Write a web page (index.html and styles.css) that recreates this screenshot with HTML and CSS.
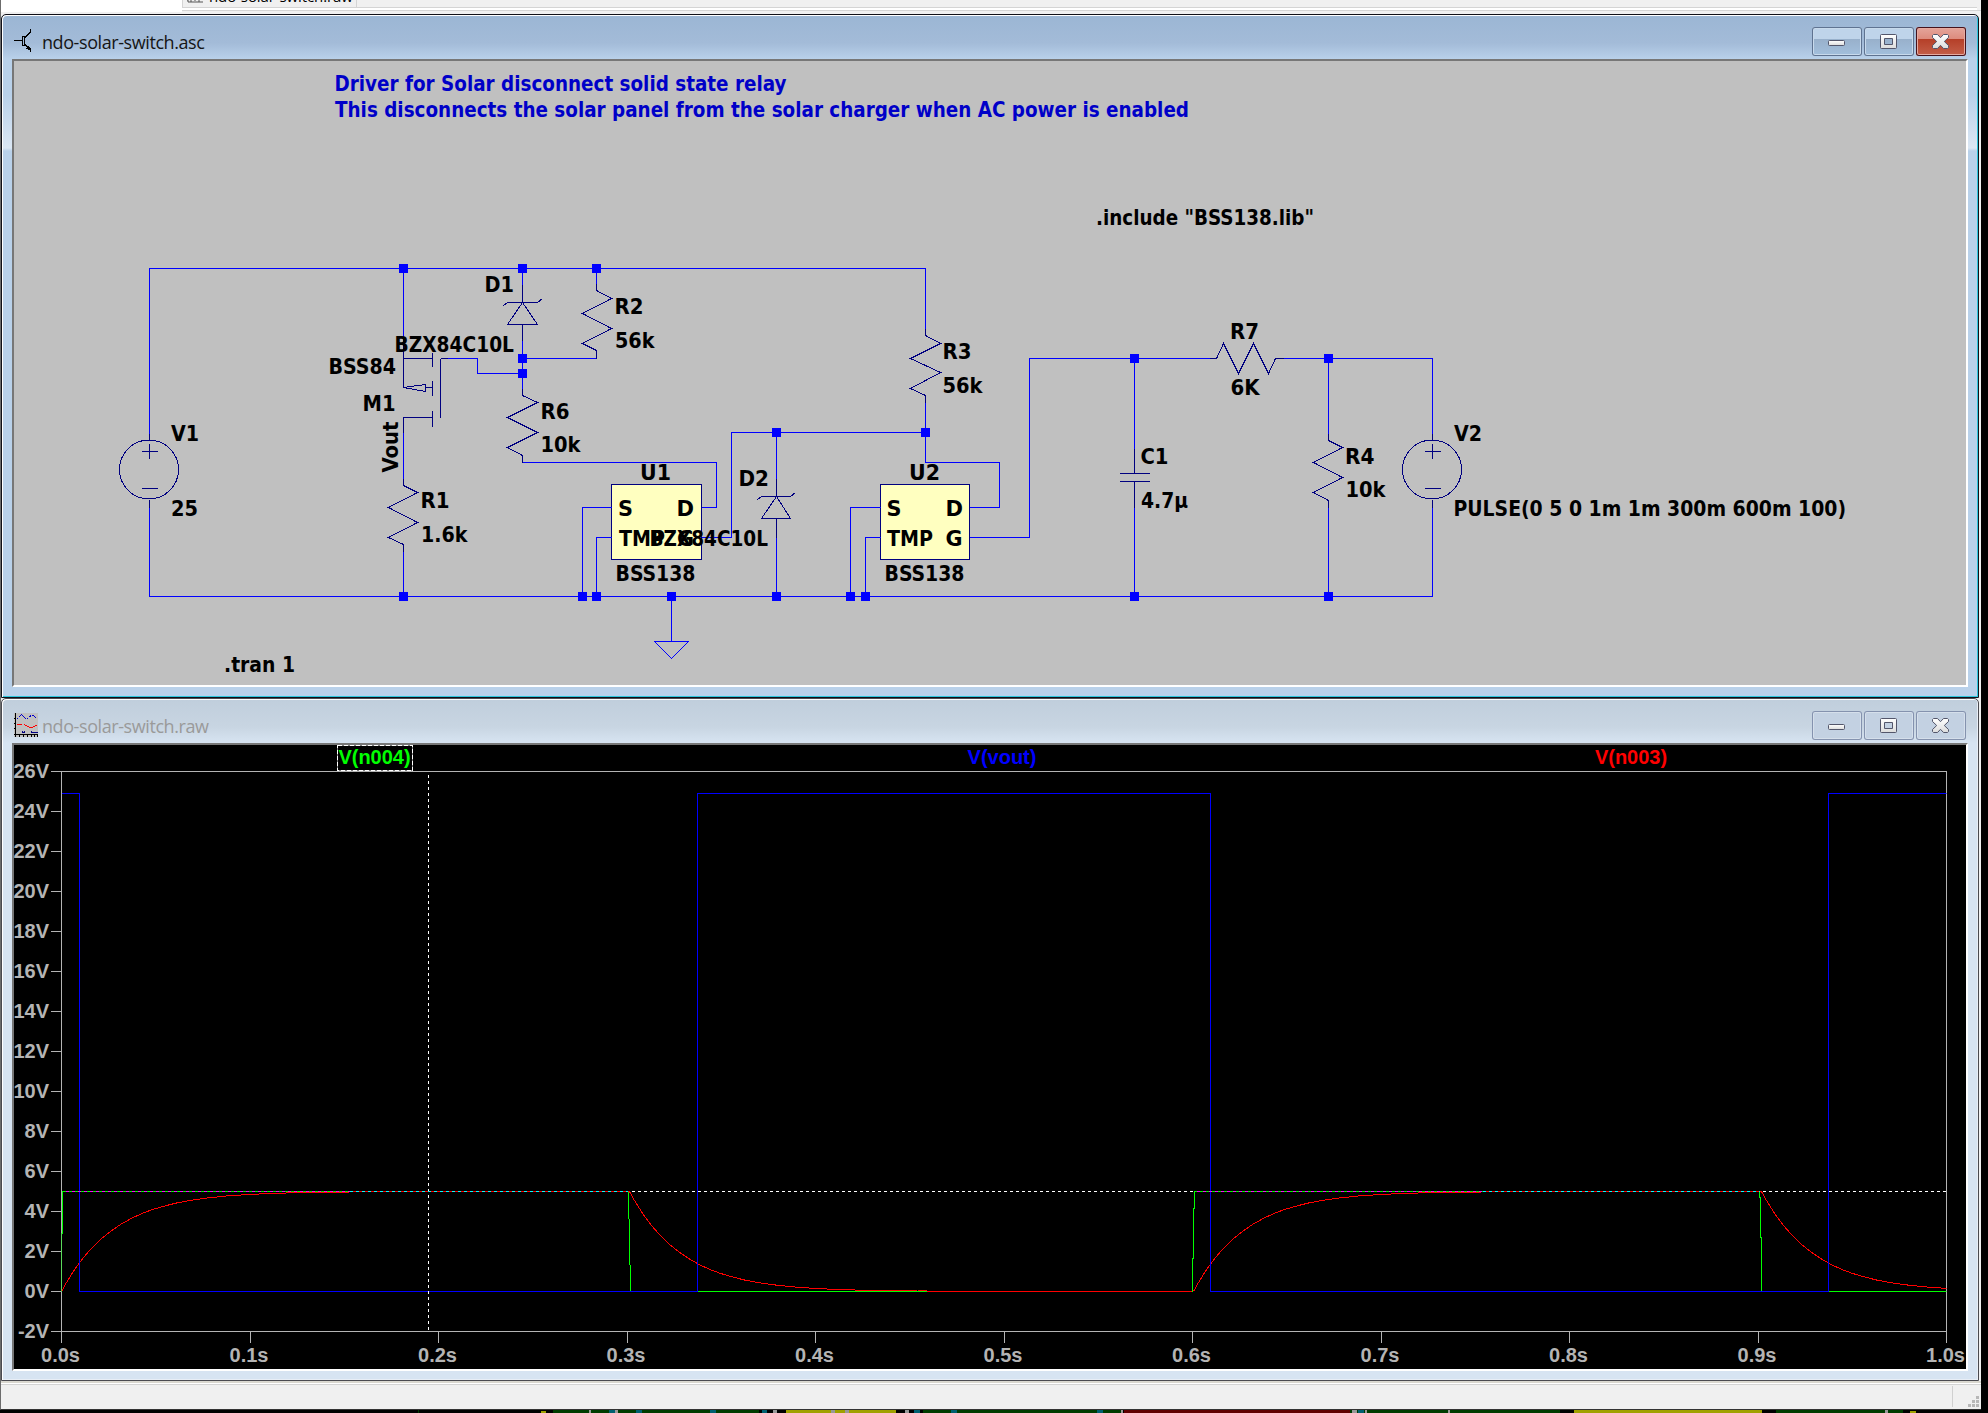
FILE: index.html
```html
<!DOCTYPE html>
<html lang="en">
<head>
<meta charset="utf-8">
<title>ndo-solar-switch</title>
<link rel="stylesheet" href="styles.css">
</head>
<body>
<svg class="symbols" width="0" height="0" aria-hidden="true">
  <defs>
    <linearGradient id="face" x1="0" y1="0" x2="0" y2="1"><stop offset="0" stop-color="#fff"/><stop offset="1" stop-color="#dcdcdc"/></linearGradient>
    <g id="ic-min"><rect x="16.5" y="13.5" width="16" height="5" rx="1" fill="url(#face)" stroke="#53566b"/></g>
    <g id="ic-max"><path d="M17.5 7.500H31.500Q32.500 7.500 32.500 8.500V20.500Q32.500 21.500 31.500 21.500H17.500Q16.500 21.500 16.500 20.500V8.500Q16.500 7.500 17.500 7.500ZM20.500 11.500V17.500H28.500V11.500Z" fill="url(#face)" fill-rule="evenodd" stroke="#53566b"/></g>
    <g id="ic-close"><path d="M17.500 7.500H21.500L24.500 10.700L27.500 7.500H31.500L32.500 8.500V10.500L28.300 14.500L32.500 18.500V20.500L31.500 21.500H27.500L24.500 18.300L21.500 21.500H17.500L16.500 20.500V18.500L20.700 14.500L16.500 10.500V8.500Z" fill="url(#face)" stroke="#53566b"/></g>
    <path id="decay" d="M0 0L5 9L10 17.100L15 24.600L20 31.300L25 37.500L30 43.100L35 48.200L40 52.900L50 60.900L60 67.600L70 73.200L80 77.800L90 81.600L100 84.700L115 88.500L130 91.300L145 93.400L165 95.500L185 96.900L210 98.100L240 98.900L288 99"/>
  </defs>
</svg>
<div class="app">
  <div class="tabs">
    <div class="tab current"></div>
    <div class="tab">
      <svg class="tab-icon" width="16" height="3"><path d="M0 0H1V2H16M4 0V2M8 0V1M12 0V2" fill="none" stroke="#555"/></svg>
      <span>ndo-solar-switch.raw</span>
    </div>
    <div class="tab-rest"></div>
  </div>

  <section class="window active">
    <header class="titlebar">
      <svg class="win-icon" width="24" height="24" viewBox="0 0 24 24" shape-rendering="crispEdges"><path d="M0 11.500H8M8.500 7V17M10.500 7V17M8 7.500H11M8 16.500H11M11 8.500L16.500 3V0M11 15.500L14 18.500" fill="none" stroke="#000"/><path d="M12 19H14V17H15V18H16V19H17V23H16V21H14V20H12Z" fill="#000"/></svg>
      <h1>ndo-solar-switch.asc</h1>
      <div class="buttons">
        <svg class="btn" viewBox="0 0 50 29"><use href="#ic-min"/></svg>
        <svg class="btn" viewBox="0 0 50 29"><use href="#ic-max"/></svg>
        <svg class="btn close" viewBox="0 0 50 29"><use href="#ic-close"/></svg>
      </div>
    </header>
    <div class="client">
      <svg class="schematic" width="1952" height="624" viewBox="14 61 1952 624">
        <g transform="translate(.5 .5)" shape-rendering="crispEdges">
          <g class="chip"><rect x="611" y="484" width="90" height="75"/><rect x="880" y="484" width="89" height="75"/></g>
          <g class="wire">
            <path d="M149 433V268H925V328M149 507V596H1432V507M403 268V343M403 432V478M403 551V596"/>
            <path d="M522 268V284M522 340V388M596 268V283M522 358H596M447 358H477V373H522M522 462H716V507H701"/>
            <path d="M611 507H582V596M611 537H596V596M701 537H731V432H925M776 432V478M776 537V596"/>
            <path d="M925 402V462H999V507H969M880 507H850V596M880 537H865V596M969 537H1029V358H1209M1283 358H1432V433"/>
            <path d="M1134 358V448M1134 507V596M1328 358V433M1328 507V596M671 596V641M654 641H688L671 658Z"/>
          </g>
          <g class="part">
            <circle cx="148.500" cy="469" r="29.500"/><path d="M149 433V440M149 499V507M141 451H157M149 443V458M141 488H157"/>
            <circle cx="1431.500" cy="469" r="29.500"/><path d="M1432 433V440M1432 499V507M1424 451H1440M1432 443V458M1424 488H1440"/>
            <path d="M403 343V387M403 358H432M432 352V366M432 380V395M432 410V426M440 358V417M440 358H447M403 387L425 384V391L403 387M425 387H432M432 417H403V432"/>
            <path d="M403 478V485L417 492L388 507L417 522L388 537L403 544V551"/>
            <path d="M522 388V395L537 402L507 417L537 432L507 447L522 455V462"/>
            <path d="M596 283V290L611 298L582 313L611 328L582 343L596 350V358"/>
            <path d="M925 328V335L940 343L910 358L940 372L910 388L925 395V402"/>
            <path d="M1328 433V440L1342 447L1313 462L1342 477L1313 492L1328 500V507"/>
            <path d="M1209 358H1216L1223 343L1238 373L1253 343L1268 373L1275 358H1283"/>
            <path d="M522 284V302L507 324H537L522 302M522 324V340M503 305L507 302H537L542 298"/>
            <path d="M776 478V496L761 518H790L776 496M776 518V537M757 499L761 496H790L795 492"/>
            <path d="M1134 448V473M1119 473H1149M1119 481H1149M1134 481V507"/>
          </g>
          <g class="node">
            <path d="M403 268h0M522 268h0M596 268h0M522 358h0M522 373h0M776 432h0M925 432h0M1134 358h0M1328 358h0"/>
            <path d="M403 596h0M582 596h0M596 596h0M671 596h0M776 596h0M850 596h0M865 596h0M1134 596h0M1328 596h0"/>
          </g>
        </g>
        <g class="note">
          <text x="334.500" y="91" textLength="452" lengthAdjust="spacingAndGlyphs">Driver for Solar disconnect solid state relay</text>
          <text x="335" y="117" textLength="854" lengthAdjust="spacingAndGlyphs">This disconnects the solar panel from the solar charger when AC power is enabled</text>
        </g>
        <g class="label">
          <text x="1096" y="225" textLength="218" lengthAdjust="spacingAndGlyphs">.include "BSS138.lib"</text>
          <text x="224" y="672" textLength="71" lengthAdjust="spacingAndGlyphs">.tran 1</text>
          <text x="484.500" y="292" textLength="29.500" lengthAdjust="spacingAndGlyphs">D1</text><text x="394.500" y="352" textLength="119.500" lengthAdjust="spacingAndGlyphs">BZX84C10L</text>
          <text x="328.500" y="374" textLength="67.500" lengthAdjust="spacingAndGlyphs">BSS84</text><text x="362.500" y="411" textLength="33" lengthAdjust="spacingAndGlyphs">M1</text>
          <text x="614.500" y="314" textLength="29" lengthAdjust="spacingAndGlyphs">R2</text><text x="615" y="348" textLength="39.500" lengthAdjust="spacingAndGlyphs">56k</text>
          <text x="540.500" y="419" textLength="29" lengthAdjust="spacingAndGlyphs">R6</text><text x="540.500" y="452" textLength="40" lengthAdjust="spacingAndGlyphs">10k</text>
          <text x="171" y="441" textLength="28" lengthAdjust="spacingAndGlyphs">V1</text><text x="171" y="516" textLength="27" lengthAdjust="spacingAndGlyphs">25</text>
          <text transform="translate(398 472.500) rotate(-90)" textLength="51" lengthAdjust="spacingAndGlyphs">Vout</text>
          <text x="420.500" y="508" textLength="29" lengthAdjust="spacingAndGlyphs">R1</text><text x="421" y="542" textLength="46.500" lengthAdjust="spacingAndGlyphs">1.6k</text>
          <text x="640" y="480" textLength="31" lengthAdjust="spacingAndGlyphs">U1</text><text x="909" y="480" textLength="31" lengthAdjust="spacingAndGlyphs">U2</text>
          <text x="618" y="516" textLength="15" lengthAdjust="spacingAndGlyphs">S</text><text x="676.500" y="516" textLength="17.500" lengthAdjust="spacingAndGlyphs">D</text>
          <text x="619" y="546" textLength="46" lengthAdjust="spacingAndGlyphs">TMP</text><text x="677" y="546" textLength="17" lengthAdjust="spacingAndGlyphs">G</text>
          <text x="615.500" y="581" textLength="80" lengthAdjust="spacingAndGlyphs">BSS138</text>
          <text x="738.500" y="486" textLength="30.500" lengthAdjust="spacingAndGlyphs">D2</text><text x="649.500" y="546" textLength="118.500" lengthAdjust="spacingAndGlyphs">BZX84C10L</text>
          <text x="886.500" y="516" textLength="15" lengthAdjust="spacingAndGlyphs">S</text><text x="945.500" y="516" textLength="17.500" lengthAdjust="spacingAndGlyphs">D</text>
          <text x="887" y="546" textLength="46" lengthAdjust="spacingAndGlyphs">TMP</text><text x="945.500" y="546" textLength="17" lengthAdjust="spacingAndGlyphs">G</text>
          <text x="884.500" y="581" textLength="80" lengthAdjust="spacingAndGlyphs">BSS138</text>
          <text x="942.500" y="359" textLength="29" lengthAdjust="spacingAndGlyphs">R3</text><text x="942.500" y="393" textLength="40" lengthAdjust="spacingAndGlyphs">56k</text>
          <text x="1140.500" y="464" textLength="28" lengthAdjust="spacingAndGlyphs">C1</text><text x="1141" y="508" textLength="47" lengthAdjust="spacingAndGlyphs">4.7µ</text>
          <text x="1230" y="339" textLength="29" lengthAdjust="spacingAndGlyphs">R7</text><text x="1230.500" y="395" textLength="29" lengthAdjust="spacingAndGlyphs">6K</text>
          <text x="1345" y="464" textLength="29.500" lengthAdjust="spacingAndGlyphs">R4</text><text x="1345.500" y="497" textLength="40" lengthAdjust="spacingAndGlyphs">10k</text>
          <text x="1454" y="441" textLength="28" lengthAdjust="spacingAndGlyphs">V2</text><text x="1453.500" y="516" textLength="392.500" lengthAdjust="spacingAndGlyphs">PULSE(0 5 0 1m 1m 300m 600m 100)</text>
        </g>
      </svg>
    </div>
  </section>

  <section class="window">
    <header class="titlebar">
      <svg class="win-icon" width="24" height="24" viewBox="0 0 24 24" shape-rendering="crispEdges"><rect width="24" height="24" fill="#c0c0c0"/><path d="M1.500 0V24M0 21.500H24M5.500 21V24M9.500 21V24M13.500 21V24M17.500 21V24M20.500 21V24M23.500 21V24M0 5.500H2M0 10.500H2M0 15.500H2" fill="none" stroke="#000"/><path d="M3 6L7.500 1.500L12 6M13 6L17 2.500H19L23 6" fill="none" stroke="#00c" stroke-dasharray="2 1"/><path d="M3 11.500H8M10 11.500L15 14H19L23 12" fill="none" stroke="#f00"/><path d="M8.500 18V19.500H10.500V18M17.500 18V19.500H24" fill="none" stroke="#000080"/></svg>
      <h1>ndo-solar-switch.raw</h1>
      <div class="buttons">
        <svg class="btn" viewBox="0 0 50 29"><use href="#ic-min"/></svg>
        <svg class="btn" viewBox="0 0 50 29"><use href="#ic-max"/></svg>
        <svg class="btn" viewBox="0 0 50 29"><use href="#ic-close"/></svg>
      </div>
    </header>
    <div class="client plot">
      <svg width="1952" height="624" viewBox="14 745 1952 624">
        <clipPath id="area"><rect x="61" y="771" width="1885" height="561"/></clipPath>
        <g transform="translate(.5 .5)" fill="none" shape-rendering="crispEdges">
          <path class="axis" d="M61 771H1946V1342M61 771V1342M61 1331H1946M50 771H61M50 811H61M50 851H61M50 891H61M50 931H61M50 971H61M50 1011H61M50 1051H61M50 1091H61M50 1131H61M50 1171H61M50 1211H61M50 1251H61M50 1291H61M50 1331H61M250 1331V1342M438 1331V1342M627 1331V1342M815 1331V1342M1004 1331V1342M1192 1331V1342M1381 1331V1342M1569 1331V1342M1758 1331V1342"/>
          <g clip-path="url(#area)">
            <g stroke="#f00">
              <use href="#decay" transform="translate(61 1291) scale(1 -1)"/>
              <use href="#decay" transform="translate(629 1191)"/>
              <use href="#decay" transform="translate(1193 1291) scale(1 -1)"/>
              <use href="#decay" transform="translate(1761 1191)"/>
              <path d="M349 1191H628M917 1290H926M926 1291H1192M1482 1191H1760"/>
            </g>
            <path stroke="#0f0" d="M61 1291V1252L62 1215V1191H349M628 1191V1200L629 1237V1238L630 1291M697 1291H926M1192 1291V1258H1193V1208H1194V1191H1482M1759 1191V1197H1760V1237H1761V1291M1828 1291H1946"/>
            <path stroke="#00f" d="M61 793H79V1291H697V793H1210V1291H1828V793H1946"/>
            <g stroke-dasharray="3 3">
              <path stroke="#fff" d="M428 774V1331M631 1191H1192M1762 1191H1946"/>
              <path stroke="#f0f" d="M65 1191H349M1196 1191H1482"/>
              <path stroke="#0ff" d="M349 1191H627M1482 1191H1759"/>
            </g>
          </g>
          <rect x="337" y="745" width="75" height="25" stroke="#808080"/>
          <rect x="337" y="745" width="75" height="25" stroke="#fff" stroke-dasharray="4 2"/>
        </g>
        <g class="trace-names">
          <text x="374.500" y="764" fill="#0f0">V(n004)</text>
          <text x="1002" y="764" fill="#00f">V(vout)</text>
          <text x="1631" y="764" fill="#f00">V(n003)</text>
        </g>
        <g class="ticks y">
          <text x="49" y="778">26V</text><text x="49" y="818">24V</text><text x="49" y="858">22V</text><text x="49" y="898">20V</text><text x="49" y="938">18V</text>
          <text x="49" y="978">16V</text><text x="49" y="1018">14V</text><text x="49" y="1058">12V</text><text x="49" y="1098">10V</text><text x="49" y="1138">8V</text>
          <text x="49" y="1178">6V</text><text x="49" y="1218">4V</text><text x="49" y="1258">2V</text><text x="49" y="1298">0V</text><text x="49" y="1338">-2V</text>
        </g>
        <g class="ticks x">
          <text x="60.500" y="1362">0.0s</text><text x="249" y="1362">0.1s</text><text x="437.500" y="1362">0.2s</text><text x="626" y="1362">0.3s</text><text x="814.500" y="1362">0.4s</text><text x="1003" y="1362">0.5s</text>
          <text x="1191.500" y="1362">0.6s</text><text x="1380" y="1362">0.7s</text><text x="1568.500" y="1362">0.8s</text><text x="1757" y="1362">0.9s</text><text x="1945.500" y="1362">1.0s</text>
        </g>
      </svg>
    </div>
  </section>

  <footer class="statusbar">
    <div class="pane"></div>
    <svg class="grip" width="11" height="11" fill="#b8b8b8"><path d="M8 0h3v3h-3zM4 4h3v3h-3zM8 4h3v3h-3zM0 8h3v3h-3zM4 8h3v3h-3zM8 8h3v3h-3z"/></svg>
  </footer>
</div>
<svg class="behind" width="1988" height="3" shape-rendering="crispEdges">
  <path fill="#003c00" d="M418 0h1v3h-1zM553 0h206v3h-206zM923 0h198v3h-198zM1350 0h210v3h-210zM1776 0h127v3h-127z"/>
  <path fill="#a0a000" d="M541 1h5v2h-5zM786 0h110v3h-110zM1574 0h188v3h-188zM1910 1h6v2h-6z"/>
  <path fill="#600000" d="M1124 0h226v3h-226z"/>
  <path fill="#006070" d="M609 0h6v3h-6zM636 0h6v3h-6zM710 0h6v3h-6zM762 0h5v3h-5zM914 0h6v3h-6zM951 0h6v3h-6zM1097 0h6v3h-6zM1358 0h6v3h-6z"/>
  <path fill="#999" d="M589 0h2v3h-2zM615 0h3v3h-3zM773 0h4v3h-4zM831 0h4v3h-4zM845 0h4v3h-4zM905 0h4v3h-4zM1121 0h2v3h-2zM1352 0h5v3h-5zM1365 0h2v3h-2zM1448 0h2v3h-2zM1885 0h3v3h-3z"/>
</svg>
</body>
</html>
```
FILE: styles.css
```css
* { box-sizing: border-box; }

body {
  margin: 0;
  width: 1988px;
  height: 1413px;
  overflow: hidden;
  background: #000;
  font-family: "Open Sans", "Noto Sans", sans-serif;
}

svg { display: block; }
.symbols { position: absolute; }

.app {
  width: 1981px;
  height: 1410px;
  background: #f0f0f0;
  border-left: 1px solid #6c6c6c;
  border-bottom: 1px solid #333;
  display: flex;
  flex-direction: column;
}

/* document tabs, scrolled almost out of view */
.tabs {
  height: 14px;
  padding-bottom: 3px;
  display: flex;
  overflow: hidden;
  background: linear-gradient(#f0f0f0 10px, #d4d4d4 10px, #d4d4d4 11px, #f0f0f0 11px);
}
.tab {
  width: 175px;
  height: 8px;
  border: 1px solid #d4d4d4;
  border-top: 0;
  padding-left: 4px;
  display: flex;
  gap: 6px;
  overflow: hidden;
  box-shadow: 0 2px #fff;
}
.tab-icon { flex: none; }
.tab span {
  font-size: 15px;
  line-height: 20px;
  height: 20px;
  margin-top: -14px;
  white-space: nowrap;
  letter-spacing: -.1px;
}
.tab.current { width: 181px; height: 10px; border: 0; background: #fff; }
.tab-rest {
  flex: 1;
  height: 10px;
  margin-right: 4px;
  background: linear-gradient(#f0f0f0 7px, #d4d4d4 7px, #d4d4d4 8px, #fff 8px);
}

.window {
  width: 1978px;
  height: 684px;
  border: 1px solid #4a4a50;
  border-radius: 5px 5px 0 0;
  padding: 0 9px 9px 10px;
  background: linear-gradient(#c0cedc, #c8d5e2 28px, #d7e4f2 44px);
  box-shadow: inset 1px 1px #fff, inset -1px -1px #e8eef6;
}
.window.active {
  border-color: #101018;
  background:
    linear-gradient(transparent 45px, #b9d1ea 45px, #b9d1ea 80px, #dbe7f4 133px, #b9d1ea 136px),
    linear-gradient(#9bb6d4, #a3bbd8 28px, #b9d1ea 44px);
  box-shadow: inset 1px 1px #fff, inset -1px -1px #2cc5dc;
}

.titlebar { height: 44px; display: flex; }
.win-icon { margin: 14px 4px 0 2px; }
.titlebar h1 {
  margin: 15px 0 0;
  font-size: 18px;
  font-weight: 400;
  line-height: 24px;
  height: 24px;
  letter-spacing: -.42px;
  color: #9a9a9a;
  white-space: nowrap;
}
.active h1 { color: #151515; }

.buttons { margin: 12px 3px 0 auto; display: flex; gap: 2px; }
.btn {
  width: 50px;
  height: 29px;
  border-radius: 3px;
  background: #c3d1e2;
  box-shadow: inset 0 0 0 1px #8492ae, inset 0 0 0 2px #d5dfeb;
}
.active .btn {
  background: linear-gradient(#bfd4ea 12px, #98b0cb 12px, #a3c0dd);
  box-shadow: inset 0 0 0 1px #5f7391, inset 0 0 0 2px #c8daec;
}
.active .btn.close {
  background: linear-gradient(#e5a79d, #dd8b7d 12px, #b53f28 12px, #c4604a);
  box-shadow: inset 0 0 0 1px #45121c, inset 0 0 0 2px #e6aaa0;
}

.client {
  width: 1956px;
  height: 628px;
  border: 2px solid;
  border-color: #777 #fff #fff #777;
  background: #c0c0c0;
}
.plot { background: #000; }

.wire { fill: none; stroke: #00f; }
.part { fill: none; stroke: #000080; }
.chip { fill: #ffffc0; stroke: #000080; }
.node { stroke: #00f; stroke-width: 9px; stroke-linecap: square; }
.node path { fill: none; stroke-linecap: square; }

.schematic text {
  font: bold 21.500px "DejaVu Sans Condensed", "DejaVu Sans", sans-serif;
  font-stretch: condensed;
}
.note { fill: #0000c8; }
.label { fill: #000; }

.plot text { font: bold 20px "Liberation Sans", Arial, sans-serif; }
.axis { stroke: #b4b4b4; }
.ticks { fill: #b4b4b4; }
.ticks.y { text-anchor: end; }
.ticks.x, .trace-names { text-anchor: middle; }

.statusbar {
  height: 28px;
  border-top: 2px solid #d9d7cf;
  box-shadow: inset 0 1px #fff, inset 0 2px #d4d4d4;
  padding-top: 3px;
  display: flex;
}
.pane { width: 1952px; height: 21px; border-right: 1px solid #d0d0d0; }
.grip { margin: 10px 0 0 15px; }
```
